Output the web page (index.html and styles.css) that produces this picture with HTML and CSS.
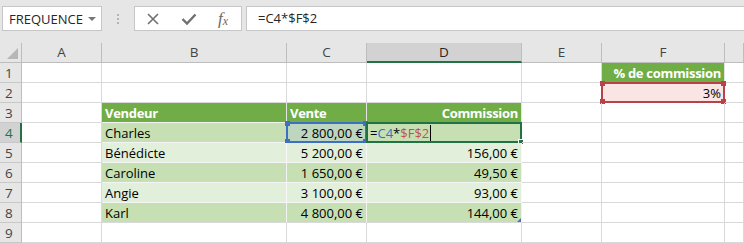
FILE: index.html
```html
<!DOCTYPE html>
<html>
<head>
<meta charset="utf-8">
<link rel="stylesheet" href="styles.css">
</head>
<body>
<div class="app">
  <div class="toolbar">
    <div class="namebox"><span class="nb-text">FREQUENCE</span><span class="dd"></span></div>
    <div class="grip"><i></i><i></i><i></i></div>
    <div class="fxbtns">
      <svg class="ico" width="14" height="14" viewBox="0 0 14 14"><path d="M2 2 L12 12 M12 2 L2 12" stroke="#707070" stroke-width="1.6" fill="none"/></svg>
      <svg class="ico" width="16" height="14" viewBox="0 0 16 14"><path d="M1.5 7 L6 11.5 L14.5 2.5" stroke="#707070" stroke-width="2.4" fill="none"/></svg>
      <span class="fx">f<span class="fxx">x</span></span>
    </div>
    <div class="formula">=C4*$F$2</div>
  </div>

  <div class="sheet">
    <div class="corner"><span class="tri"></span></div>
    <div class="ch">A</div><div class="ch">B</div><div class="ch">C</div><div class="ch sel">D</div><div class="ch">E</div><div class="ch">F</div><div class="ch"></div>

    <div class="rh">1</div><div class="c"></div><div class="c"></div><div class="c"></div><div class="c"></div><div class="c"></div><div class="c th right">% de commission</div><div class="c"></div>

    <div class="rh">2</div><div class="c"></div><div class="c"></div><div class="c"></div><div class="c"></div><div class="c"></div><div class="c pct right">3%<span class="refbox red"><i class="h tl"></i><i class="h tr"></i><i class="h bl"></i><i class="h br"></i></span></div><div class="c"></div>

    <div class="rh">3</div><div class="c"></div><div class="c th">Vendeur</div><div class="c th">Vente</div><div class="c th right">Commission</div><div class="c"></div><div class="c"></div><div class="c"></div>

    <div class="rh rsel">4</div><div class="c"></div><div class="c dk">Charles</div><div class="c dk cref right">2 800,00 €<span class="refbox blue"><i class="h tl"></i><i class="h tr"></i><i class="h bl"></i><i class="h br"></i></span></div><div class="c dk active">=<span class="fb">C4</span>*<span class="fr">$F$2</span><span class="cursor"></span><span class="actbox"><i class="fill"></i></span></div><div class="c"></div><div class="c"></div><div class="c"></div>

    <div class="rh">5</div><div class="c"></div><div class="c lt">Bénédicte</div><div class="c lt right">5 200,00 €</div><div class="c lt right">156,00 €</div><div class="c"></div><div class="c"></div><div class="c"></div>

    <div class="rh">6</div><div class="c"></div><div class="c dk">Caroline</div><div class="c dk right">1 650,00 €</div><div class="c dk right">49,50 €</div><div class="c"></div><div class="c"></div><div class="c"></div>

    <div class="rh">7</div><div class="c"></div><div class="c lt">Angie</div><div class="c lt right">3 100,00 €</div><div class="c lt right">93,00 €</div><div class="c"></div><div class="c"></div><div class="c"></div>

    <div class="rh">8</div><div class="c"></div><div class="c dk last">Karl</div><div class="c dk last right">4 800,00 €</div><div class="c dk last right">144,00 €<span class="resize"></span></div><div class="c"></div><div class="c"></div><div class="c"></div>

    <div class="rh">9</div><div class="c"></div><div class="c"></div><div class="c"></div><div class="c"></div><div class="c"></div><div class="c"></div><div class="c"></div>
  </div>
</div>
</body>
</html>
```
FILE: styles.css
```css
* { box-sizing: border-box; }
html, body { margin: 0; padding: 0; background: #fff; }
.app { width: 744px; height: 243px; overflow: hidden; font-family: "Open Sans", "Noto Sans", sans-serif; }

.toolbar {
  height: 43px;
  background: #e6e6e6;
  display: flex;
  align-items: flex-start;
  padding: 6px 0 0 2px;
}
.namebox {
  width: 100px; height: 25px;
  background: #fff; border: 1px solid #c6c6c6;
  display: flex; align-items: center; justify-content: space-between;
  padding: 0 5px 0 6px;
  font-size: 13px; color: #262626;
}
.dd { width: 0; height: 0; border-left: 4px solid transparent; border-right: 4px solid transparent; border-top: 4px solid #777; margin-top: 1px; }
.grip { width: 32px; height: 25px; display: flex; flex-direction: column; align-items: center; justify-content: center; gap: 2px; }
.grip i { display: block; width: 2px; height: 2px; background: #b4b4b4; }
.fxbtns {
  width: 108px; height: 25px;
  background: #fff; border: 1px solid #c6c6c6;
  display: flex; align-items: center;
  padding-left: 11px;
}
.fxbtns .ico:nth-child(1) { margin-right: 21px; }
.fxbtns .ico:nth-child(2) { margin-right: 21px; }
.fx { font-family: "Liberation Serif", serif; font-style: italic; font-size: 17px; color: #6a6a6a; line-height: 1; }
.fxx { font-size: 12px; position: relative; top: 1px; }
.formula {
  flex: 1; height: 25px; margin-left: 4px; margin-right: -4px;
  background: #fff; border: 1px solid #c6c6c6;
  padding-left: 11px; font-size: 13px; line-height: 23px; color: #262626;
}

.sheet {
  display: grid;
  grid-template-columns: 22px 80px 185px 80px 155px 80px 123px 1fr;
  grid-auto-rows: 20px;
}
.corner { background: #e6e6e6; border-right: 1px solid #bdbdbd; border-bottom: 1px solid #bdbdbd; position: relative; }
.tri { position: absolute; right: 3px; bottom: 3px; width: 0; height: 0; border-left: 11px solid transparent; border-bottom: 11px solid #b6b6b6; }
.ch {
  background: #e6e6e6; border-right: 1px solid #bdbdbd; border-bottom: 1px solid #bdbdbd;
  text-align: center; font-size: 13.5px; color: #444; line-height: 19px;
}
.ch.sel { background: #d2d2d2; border-bottom: 2px solid #217346; color: #262626; }
.rh {
  background: #e6e6e6; border-right: 1px solid #bdbdbd; border-bottom: 1px solid #c8c8c8;
  font-size: 13.5px; color: #444; line-height: 20px; padding-left: 5px;
}
.rh.rsel { background: #d2d2d2; color: #217346; border-right: 2px solid #217346; }

.c {
  border-right: 1px solid #d9d9d9; border-bottom: 1px solid #d9d9d9;
  font-size: 13px; color: #000; line-height: 20px; padding: 0 3px;
  white-space: nowrap; position: relative;
}
.right { text-align: right; }
.th { background: #70ad47; color: #fff; font-weight: bold; letter-spacing: -0.3px; border-right-color: #e3e3e3; border-bottom-color: #f2f2f2; }
.dk { background: #c6e0b4; border-right-color: #f2f2f2; border-bottom-color: #f4f4f4; }
.lt { background: #e2efda; border-right-color: #f7f7f7; border-bottom-color: #f4f4f4; }
.last { border-bottom-color: #d9d9d9; }
.pct { background: #fbe4e4; }
.cref { background: #bcd6bf; }

.fb { color: #3b6fc0; }
.fr { color: #c0504d; }
.cursor { display: inline-block; width: 1px; height: 16px; background: #000; vertical-align: -3px; margin-left: 1px; }

.refbox { position: absolute; left: -1px; top: -1px; right: -1px; bottom: -1px; border: 2px solid; }
.refbox.blue { border-color: #3f6fc1; }
.refbox.red { border-color: #b8424a; }
.h { position: absolute; width: 5px; height: 5px; }
.blue .h { background: #3f6fc1; }
.red .h { background: #b8424a; }
.h.tl { left: -3px; top: -3px; }
.h.tr { right: -3px; top: -3px; }
.h.bl { left: -3px; bottom: -3px; }
.h.br { right: -3px; bottom: -3px; }

.actbox { position: absolute; left: -1px; top: -1px; right: -1px; bottom: -1px; border: 2px solid #217346; }
.fill { position: absolute; right: -4px; bottom: -4px; width: 6px; height: 6px; background: #217346; border: 1px solid #fff; }
.resize { position: absolute; right: 0; bottom: 0; width: 0; height: 0; border-left: 4px solid transparent; border-bottom: 4px solid #4a74b5; }
```
